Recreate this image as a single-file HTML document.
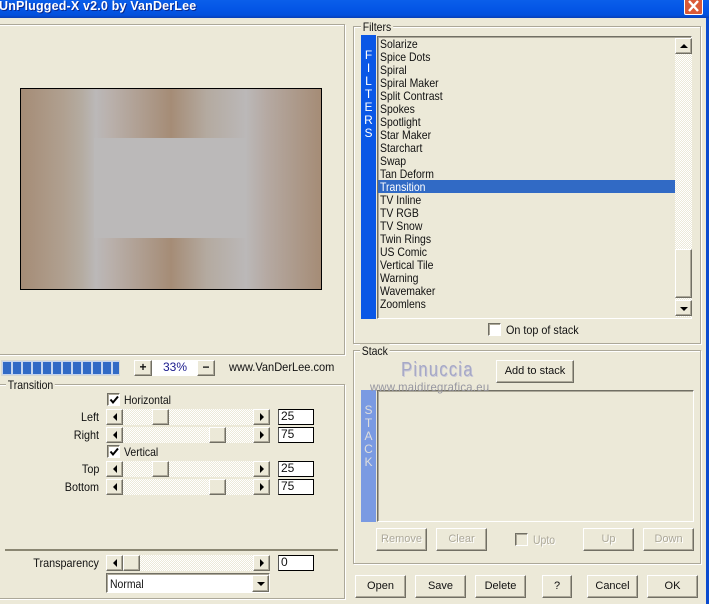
<!DOCTYPE html>
<html><head><meta charset="utf-8">
<style>
html,body{margin:0;padding:0}
body{width:709px;height:604px;overflow:hidden;position:relative;background:#ECE9D8;font:12px/14px "Liberation Sans",sans-serif;color:#111}
.a,.t,.b,.g,.sb,.e,.ck{position:absolute}
.t{white-space:nowrap;transform:scaleX(.87);transform-origin:0 0}
.g{border:1px solid #ACA899;box-shadow:inset 1px 1px 0 #fff,1px 1px 0 #fff}
.gl{position:absolute;background:#ECE9D8;padding:0 2px;white-space:nowrap;height:14px;transform:scaleX(.87);transform-origin:0 0}
.b{background:#ECE9D8;box-sizing:border-box;border:1px solid;border-color:#fff #716F64 #716F64 #fff;box-shadow:inset -1px -1px 0 #ACA899;text-align:center;line-height:20px;font-size:11px}
.d{color:#ACA899;text-shadow:1px 1px 0 #fff}
.sb{background:repeating-conic-gradient(#fff 0 25%,#ECE9D8 0 50%) 0 0/2px 2px}
.ar{width:0;height:0;position:absolute}
.l{border-top:4px solid transparent;border-bottom:4px solid transparent;border-right:4px solid #000;left:6px;top:3px}
.r{border-top:4px solid transparent;border-bottom:4px solid transparent;border-left:4px solid #000;left:6px;top:3px}
.u{border-left:4px solid transparent;border-right:4px solid transparent;border-bottom:4px solid #000;left:4px;top:5px}
.dn{border-left:4px solid transparent;border-right:4px solid transparent;border-top:4px solid #000;left:4px;top:6px}
.e{background:#fff;box-sizing:border-box;border:1px solid;border-color:#000 #000 #000 #555;width:36px;height:16px;padding-left:2px;line-height:13px;left:278px}
.ck{width:13px;height:13px;box-sizing:border-box;background:#fff;border:1px solid;border-color:#716F64 #fff #fff #716F64;box-shadow:inset 1px 1px 0 #ACA899}
.ck svg{position:absolute;left:1px;top:1px}
.li{position:absolute;left:380px;white-space:nowrap;height:13px;line-height:13px;transform:scaleX(.87);transform-origin:0 0}
.v{position:absolute;width:15px;text-align:center;color:#fff;left:361px;line-height:13px}
.lb{position:absolute;right:610px;white-space:nowrap;transform:scaleX(.9);transform-origin:100% 0}
</style></head><body>

<!-- title bar -->
<div class="a" style="left:0;top:0;width:709px;height:18px;background:linear-gradient(#0A5FEA 0,#0456E6 50%,#0350DC 85%,#0A3FB4 100%)"></div>
<div class="t" style="left:-1px;top:-1px;color:#fff;font-weight:bold;font-size:12.5px;line-height:15px;letter-spacing:.17px;text-shadow:1px 1px 0 #0A2A90;transform:none">UnPlugged-X v2.0 by VanDerLee</div>
<div class="a" style="left:684px;top:-2px;width:19px;height:17px;box-sizing:border-box;background:#DA5A38;border:1px solid #fff;border-radius:2px"></div>
<svg class="a" style="left:684px;top:-2px" width="19" height="17"><path d="M5 3L14 13M14 3L5 13" stroke="#fff" stroke-width="2.4"/></svg>
<div class="a" style="left:706px;top:18px;width:3px;height:586px;background:#0A4BCF"></div>

<!-- preview group -->
<div class="g" style="left:-3px;top:24px;width:346px;height:329px"></div>
<div class="a" style="left:20px;top:88px;width:300px;height:200px;border:1px solid #000;background:linear-gradient(90deg,#A58C76 0,#B0A090 14%,#B4ABA0 20%,#BBB8B8 25%,#B9B0AB 30%,#A58C76 50%,#B4AAA0 62%,#BBB8B8 75%,#B5A9A2 82%,#A58C76 100%)">
<div class="a" style="left:73px;top:49px;width:152px;height:100px;background:#BBB9B9"></div>
</div>

<!-- progress -->
<div class="a" style="left:1px;top:360px;width:119px;height:16px;box-sizing:border-box;border:1px solid #D8D8D0;background:#C5D5EE;padding:1px;display:flex;gap:2px;overflow:hidden">
<i style="width:8px;flex:none;background:#316AC5"></i><i style="width:8px;flex:none;background:#316AC5"></i><i style="width:8px;flex:none;background:#316AC5"></i><i style="width:8px;flex:none;background:#316AC5"></i><i style="width:8px;flex:none;background:#316AC5"></i><i style="width:8px;flex:none;background:#316AC5"></i><i style="width:8px;flex:none;background:#316AC5"></i><i style="width:8px;flex:none;background:#316AC5"></i><i style="width:8px;flex:none;background:#316AC5"></i><i style="width:8px;flex:none;background:#316AC5"></i><i style="width:8px;flex:none;background:#316AC5"></i><i style="width:8px;flex:none;background:#316AC5"></i>
</div>
<div class="a" style="left:152px;top:360px;width:46px;height:16px;background:#fff"></div>
<div class="b" style="left:134px;top:360px;width:18px;height:16px;line-height:13px;font-weight:bold;font-size:12px">+</div>
<div class="b" style="left:197px;top:360px;width:18px;height:16px;line-height:13px;font-weight:bold;font-size:12px">−</div>
<div class="t" style="left:152px;top:360px;width:46px;text-align:center;color:#1a1a8c;transform:none">33%</div>
<div class="t" style="left:229px;top:360px;font-size:12px;transform:scaleX(.92)">www.VanDerLee.com</div>

<!-- transition group -->
<div class="g" style="left:-3px;top:384px;width:346px;height:213px"></div>
<div class="gl" style="left:6px;top:378px">Transition</div>

<div class="ck" style="left:107px;top:393px"><svg width="10" height="10"><path d="M1.5 4.5L4 7.5L9 1.5" fill="none" stroke="#000" stroke-width="2"/></svg></div>
<div class="t" style="left:124px;top:393px">Horizontal</div>
<div class="ck" style="left:107px;top:445px"><svg width="10" height="10"><path d="M1.5 4.5L4 7.5L9 1.5" fill="none" stroke="#000" stroke-width="2"/></svg></div>
<div class="t" style="left:124px;top:445px">Vertical</div>

<div class="lb" style="top:410px">Left</div>
<div class="lb" style="top:428px">Right</div>
<div class="lb" style="top:462px">Top</div>
<div class="lb" style="top:480px">Bottom</div>
<div class="lb" style="top:556px">Transparency</div>

<div class="sb" style="left:106px;top:409px;width:164px;height:16px"><div class="b" style="left:0;top:0;width:17px;height:16px"><i class="ar l"></i></div><div class="b" style="left:46px;top:0;width:17px;height:16px"></div><div class="b" style="right:0;top:0;width:17px;height:16px"><i class="ar r"></i></div></div>
<div class="sb" style="left:106px;top:427px;width:164px;height:16px"><div class="b" style="left:0;top:0;width:17px;height:16px"><i class="ar l"></i></div><div class="b" style="left:103px;top:0;width:17px;height:16px"></div><div class="b" style="right:0;top:0;width:17px;height:16px"><i class="ar r"></i></div></div>
<div class="sb" style="left:106px;top:461px;width:164px;height:16px"><div class="b" style="left:0;top:0;width:17px;height:16px"><i class="ar l"></i></div><div class="b" style="left:46px;top:0;width:17px;height:16px"></div><div class="b" style="right:0;top:0;width:17px;height:16px"><i class="ar r"></i></div></div>
<div class="sb" style="left:106px;top:479px;width:164px;height:16px"><div class="b" style="left:0;top:0;width:17px;height:16px"><i class="ar l"></i></div><div class="b" style="left:103px;top:0;width:17px;height:16px"></div><div class="b" style="right:0;top:0;width:17px;height:16px"><i class="ar r"></i></div></div>

<div class="e" style="top:409px">25</div>
<div class="e" style="top:427px">75</div>
<div class="e" style="top:461px">25</div>
<div class="e" style="top:479px">75</div>

<div class="a" style="left:5px;top:549px;width:333px;height:2px;background:#8A8672"></div>
<div class="sb" style="left:106px;top:555px;width:164px;height:16px"><div class="b" style="left:0;top:0;width:17px;height:16px"><i class="ar l"></i></div><div class="b" style="left:17px;top:0;width:17px;height:16px"></div><div class="b" style="right:0;top:0;width:17px;height:16px"><i class="ar r"></i></div></div>
<div class="e" style="top:555px">0</div>

<div class="a" style="left:106px;top:573px;width:164px;height:20px;box-sizing:border-box;background:#fff;border:1px solid;border-color:#716F64 #fff #fff #716F64;box-shadow:inset 1px 1px 0 #ACA899"></div>
<div class="t" style="left:110px;top:577px">Normal</div>
<div class="b" style="left:252px;top:575px;width:17px;height:17px"><i class="ar dn"></i></div>

<!-- filters group -->
<div class="g" style="left:353px;top:26px;width:346px;height:316px"></div>
<div class="gl" style="left:361px;top:20px">Filters</div>
<div class="a" style="left:361px;top:35px;width:15px;height:284px;background:#0A57E6"></div>
<div class="a" style="left:377px;top:36px;width:315px;height:283px;box-sizing:border-box;border:1px solid;border-color:#716F64 #fff #fff #716F64;box-shadow:inset 1px 1px 0 #ACA899"></div>
<div class="v" style="top:49px">F</div><div class="v" style="top:62px">I</div><div class="v" style="top:75px">L</div><div class="v" style="top:88px">T</div><div class="v" style="top:101px">E</div><div class="v" style="top:114px">R</div><div class="v" style="top:127px">S</div>

<div class="li" style="top:38px">Solarize</div>
<div class="li" style="top:51px">Spice Dots</div>
<div class="li" style="top:64px">Spiral</div>
<div class="li" style="top:77px">Spiral Maker</div>
<div class="li" style="top:90px">Split Contrast</div>
<div class="li" style="top:103px">Spokes</div>
<div class="li" style="top:116px">Spotlight</div>
<div class="li" style="top:129px">Star Maker</div>
<div class="li" style="top:142px">Starchart</div>
<div class="li" style="top:155px">Swap</div>
<div class="li" style="top:168px">Tan Deform</div>
<div class="a" style="left:378px;top:180px;width:297px;height:13px;background:#316AC5"></div>
<div class="li" style="top:181px;color:#fff">Transition</div>
<div class="li" style="top:194px">TV Inline</div>
<div class="li" style="top:207px">TV RGB</div>
<div class="li" style="top:220px">TV Snow</div>
<div class="li" style="top:233px">Twin Rings</div>
<div class="li" style="top:246px">US Comic</div>
<div class="li" style="top:259px">Vertical Tile</div>
<div class="li" style="top:272px">Warning</div>
<div class="li" style="top:285px">Wavemaker</div>
<div class="li" style="top:298px">Zoomlens</div>

<div class="sb" style="left:675px;top:38px;width:17px;height:279px">
<div class="b" style="left:0;top:0;width:17px;height:16px"><i class="ar u"></i></div>
<div class="b" style="left:0;top:211px;width:17px;height:49px"></div>
<div class="b" style="left:0;top:262px;width:17px;height:16px"><i class="ar dn"></i></div>
</div>
<div class="ck" style="left:488px;top:323px;box-shadow:inset 1px 1px 0 #ACA899"></div>
<div class="t" style="left:506px;top:323px;transform:scaleX(.9)">On top of stack</div>

<!-- stack group -->
<div class="g" style="left:353px;top:350px;width:346px;height:212px"></div>
<div class="gl" style="left:360px;top:344px">Stack</div>
<div class="b" style="left:496px;top:360px;width:78px;height:23px">Add to stack</div>
<div class="a" style="left:361px;top:390px;width:15px;height:132px;background:#7A9AE2"></div>
<div class="a" style="left:377px;top:390px;width:317px;height:132px;box-sizing:border-box;border:1px solid;border-color:#716F64 #fff #fff #716F64;box-shadow:inset 1px 1px 0 #ACA899"></div>
<div class="v" style="top:404px;color:#ddd">S</div><div class="v" style="top:417px;color:#ddd">T</div><div class="v" style="top:430px;color:#ddd">A</div><div class="v" style="top:443px;color:#ddd">C</div><div class="v" style="top:456px;color:#ddd">K</div>
<div class="t" style="left:401px;top:358px;font-size:20px;line-height:24px;letter-spacing:1.5px;color:#A6A8C6;text-shadow:1px 1px 0 #C8C8D8;transform:scaleX(.83)">Pinuccia</div>
<div class="t" style="left:370px;top:380px;font-size:12px;letter-spacing:.3px;color:#9696A0;transform:scaleX(.94)">www.maidiregrafica.eu</div>

<div class="b d" style="left:376px;top:528px;width:51px;height:23px">Remove</div>
<div class="b d" style="left:436px;top:528px;width:51px;height:23px">Clear</div>
<div class="ck" style="left:515px;top:533px;background:#ECE9D8"></div>
<div class="t d" style="left:533px;top:533px">Upto</div>
<div class="b d" style="left:583px;top:528px;width:51px;height:23px">Up</div>
<div class="b d" style="left:643px;top:528px;width:51px;height:23px">Down</div>

<div class="b" style="left:355px;top:575px;width:51px;height:23px">Open</div>
<div class="b" style="left:415px;top:575px;width:51px;height:23px">Save</div>
<div class="b" style="left:475px;top:575px;width:51px;height:23px">Delete</div>
<div class="b" style="left:542px;top:575px;width:30px;height:23px">?</div>
<div class="b" style="left:587px;top:575px;width:51px;height:23px">Cancel</div>
<div class="b" style="left:647px;top:575px;width:51px;height:23px">OK</div>
</body></html>
